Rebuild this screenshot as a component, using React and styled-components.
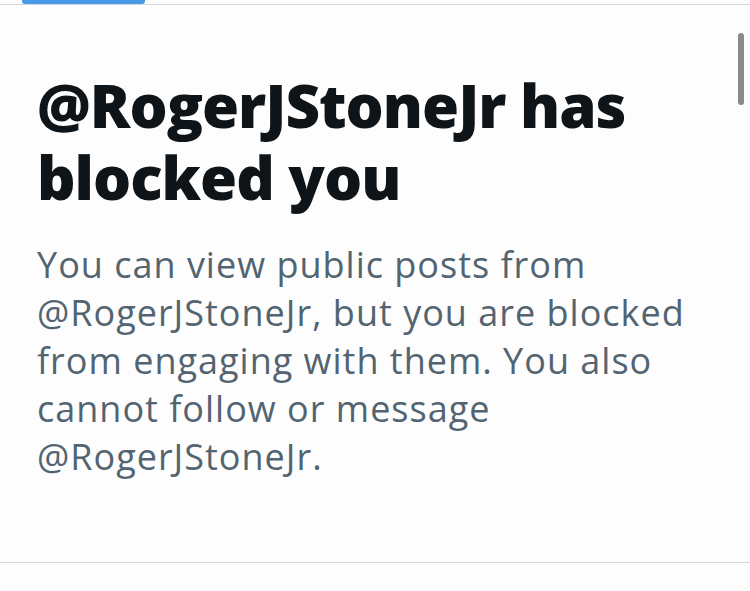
import styled, { createGlobalStyle } from "styled-components";

const Global = createGlobalStyle`
  html, body {
    margin: 0;
    padding: 0;
    background: #fdfdfd;
  }
  body {
    font-family: "Open Sans", "Liberation Sans", sans-serif;
  }
`;

const Root = styled.div`
  position: relative;
  width: 750px;
  height: 591px;
  overflow: hidden;
  background: #fdfdfd;
`;

const TopBar = styled.div`
  height: 4px;
  border-bottom: 1px solid #cfd9de;
  padding-left: 22px;
`;

const ActiveTab = styled.div`
  width: 123px;
  height: 4px;
  background: #4a99e9;
  border-radius: 0 0 3px 3px;
`;

const Content = styled.div`
  padding: 64px 30px 0 37px;
  height: 558px;
  box-sizing: border-box;
  border-bottom: 1px solid #cfd9de;
`;

const Title = styled.h1`
  margin: 0;
  font-family: "Open Sans", "Liberation Sans", sans-serif;
  font-weight: 800;
  font-size: 60px;
  line-height: 72px;
  color: #0f1419;
  letter-spacing: -1px;
`;

const Body = styled.p`
  margin: 28px 0 0;
  font-family: "Open Sans", "Liberation Sans", sans-serif;
  font-size: 36px;
  line-height: 48px;
  color: #536471;
  letter-spacing: 1px;
`;

const Scrollbar = styled.div`
  position: absolute;
  right: 6px;
  top: 33px;
  width: 6px;
  height: 72px;
  border-radius: 3px;
  background: #8a8a8a;
`;

export default function App() {
  return (
    <Root>
      <Global />
      <TopBar>
        <ActiveTab />
      </TopBar>
      <Content>
        <Title>
          @RogerJStoneJr has
          <br />
          blocked you
        </Title>
        <Body>
          You can view public posts from
          <br />
          @RogerJStoneJr, but you are blocked
          <br />
          from engaging with them. You also
          <br />
          cannot follow or message
          <br />
          @RogerJStoneJr.
        </Body>
      </Content>
      <Scrollbar />
    </Root>
  );
}
